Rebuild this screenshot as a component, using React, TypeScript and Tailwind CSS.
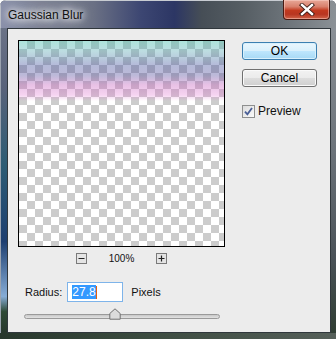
import React, { useState } from 'react';

function ZoomBox({ plus }: { plus?: boolean }) {
  return (
    <div className="w-[11px] h-[11px] border border-[#7a7a7a] bg-[#e4e4e4] flex items-center justify-center">
      <svg width="9" height="9" viewBox="0 0 9 9">
        <path d="M1.5 4.5h6" stroke="#222" strokeWidth="1.2" />
        {plus && <path d="M4.5 1.5v6" stroke="#222" strokeWidth="1.2" />}
      </svg>
    </div>
  );
}

function CloseButton() {
  return (
    <div className="w-[47px] h-[20px] rounded-b-[4px] border border-t-0 border-[#4a1a12] bg-[linear-gradient(180deg,#e8a898_0%,#d8806c_35%,#c2391f_55%,#b83520_75%,#d0644a_100%)] shadow-[inset_0_0_0_1px_rgba(255,220,210,0.45)] flex items-center justify-center">
      <svg width="16" height="13" viewBox="0 0 16 13">
        <path
          d="M3 2l10 9M13 2L3 11"
          stroke="#3a1a14"
          strokeWidth="4.2"
          strokeLinecap="square"
        />
        <path
          d="M3 2l10 9M13 2L3 11"
          stroke="#ffffff"
          strokeWidth="2.4"
          strokeLinecap="square"
        />
      </svg>
    </div>
  );
}

export default function App() {
  const [preview, setPreview] = useState(true);
  const [radius, setRadius] = useState('27.8');

  return (
    <div className="w-[336px] h-[339px] flex flex-col overflow-hidden rounded-t-[6px] bg-[#4a535a] font-['Liberation_Sans',Arial,sans-serif] text-[11px] text-black">
      {/* title bar */}
      <div className="h-[28px] flex items-start bg-[linear-gradient(90deg,#8a90aa_0%,#7c8294_12%,#6a7084_28%,#3c4672_42%,#2c3664_52%,#464e56_60%,#555d63_72%,#6e757b_86%,#8b9196_100%)] border-t border-[#c8ccd2] shadow-[inset_1px_0_0_#b8bcc4]">
        <div className="pl-[8px] pt-[7px] text-[12px] leading-[14px] text-[#111] [text-shadow:0_0_6px_#fff,0_0_10px_#fff,0_0_14px_#fff]">
          Gaussian Blur
        </div>
        <div className="ml-auto mr-[6px] -mt-px">
          <CloseButton />
        </div>
      </div>

      <div className="flex flex-1">
        {/* left frame */}
        <div className="w-[7px] bg-[linear-gradient(180deg,#6a7286_0%,#58627a_20%,#2d5c74_45%,#1e3f70_70%,#86acd6_88%,#2e4a36_93%,#27372c_100%)] shadow-[inset_1px_0_0_#9aa2ae]" />

        {/* content */}
        <div className="w-[324px] border border-[#30373c] bg-[#ececec] flex flex-col pl-[10px] pt-[11px]">
          <div className="flex">
            <div className="flex flex-col">
              {/* preview */}
              <div className="relative w-[207px] h-[207px] border border-black bg-[conic-gradient(#cccccc_25%,#ffffff_0_50%,#cccccc_0_75%,#ffffff_0)] bg-[length:16px_16px]">
                <div className="absolute left-0 top-0 w-full h-[62px] bg-[linear-gradient(180deg,rgba(60,190,168,0.42)_0px,rgba(90,170,180,0.4)_10px,rgba(70,84,160,0.4)_24px,rgba(86,80,158,0.4)_34px,rgba(196,92,188,0.38)_44px,rgba(226,120,210,0.32)_54px,rgba(240,160,230,0)_60px)]" />
              </div>

              {/* zoom row */}
              <div className="mt-[6px] h-[11px] flex items-center justify-center gap-[22px]">
                <ZoomBox />
                <span className="text-[10px] leading-[11px] text-[#111]">100%</span>
                <ZoomBox plus />
              </div>

              {/* radius row */}
              <div className="mt-[18px] ml-[7px] flex items-center h-[20px]">
                <span className="text-[#111]">Radius:</span>
                <div className="ml-[5px] w-[56px] h-[20px] border border-[#7eb4ea] bg-white flex items-center pl-[4px]">
                  <span className="bg-[#3399ff] text-white text-[12px] leading-[14px]">{radius}</span>
                  <span className="w-px h-[13px] bg-[#e06010]" />
                  <input
                    className="sr-only"
                    value={radius}
                    onChange={(e) => setRadius(e.target.value)}
                  />
                </div>
                <span className="ml-[8px] text-[#111]">Pixels</span>
              </div>

              {/* slider */}
              <div className="relative mt-[8px] ml-[6px] w-[196px] h-[12px] flex items-center">
                <div className="w-full h-[5px] rounded-full border border-[#9a9a9a] bg-[linear-gradient(180deg,#c8c8c8,#e2e2e2)]" />
                <svg
                  className="absolute left-[85px] top-[-2px]"
                  width="12"
                  height="12"
                  viewBox="0 0 12 12"
                >
                  <path
                    d="M6 0.8L11.2 5.5V11.2H0.8V5.5Z"
                    fill="#dcdcdc"
                    stroke="#707070"
                  />
                </svg>
              </div>
            </div>

            {/* buttons */}
            <div className="ml-[17px] mt-[2px] flex flex-col">
              <button className="w-[75px] h-[18px] rounded-[3px] border border-[#3c7fb1] bg-[linear-gradient(180deg,#eaf6fd_0%,#d9f0fc_50%,#bee6fd_51%,#a7d9f5_100%)] shadow-[inset_0_0_0_1px_#d8f0fc] text-[12px] leading-[14px] text-black">
                OK
              </button>
              <button className="mt-[9px] w-[75px] h-[18px] rounded-[3px] border border-[#707070] bg-[linear-gradient(180deg,#f2f2f2_0%,#ebebeb_50%,#dddddd_51%,#cfcfcf_100%)] shadow-[inset_0_0_0_1px_#fafafa] text-[12px] leading-[14px] text-black">
                Cancel
              </button>
              <label className="mt-[17px] flex items-center gap-[3px]">
                <span
                  className="w-[13px] h-[13px] border border-[#8e8f8f] bg-[linear-gradient(135deg,#dcdcdc,#fbfbfb)] flex items-center justify-center"
                  onClick={() => setPreview(!preview)}
                >
                  {preview && (
                    <svg width="9" height="9" viewBox="0 0 9 9">
                      <path
                        d="M1 4.6L3.4 7.4L8 1"
                        fill="none"
                        stroke="#4a5f97"
                        strokeWidth="1.8"
                      />
                    </svg>
                  )}
                </span>
                <span className="text-[12px] leading-[14px] text-[#111]">Preview</span>
              </label>
            </div>
          </div>
        </div>

        {/* right frame */}
        <div className="w-[5px] bg-[linear-gradient(180deg,#8a9096_0%,#6c737a_40%,#4a5258_75%,#2f3d33_100%)]" />
      </div>

      {/* bottom frame */}
      <div className="h-[6px] bg-[linear-gradient(90deg,#27372c_0%,#3a4a3e_40%,#56605a_100%)]" />
    </div>
  );
}
